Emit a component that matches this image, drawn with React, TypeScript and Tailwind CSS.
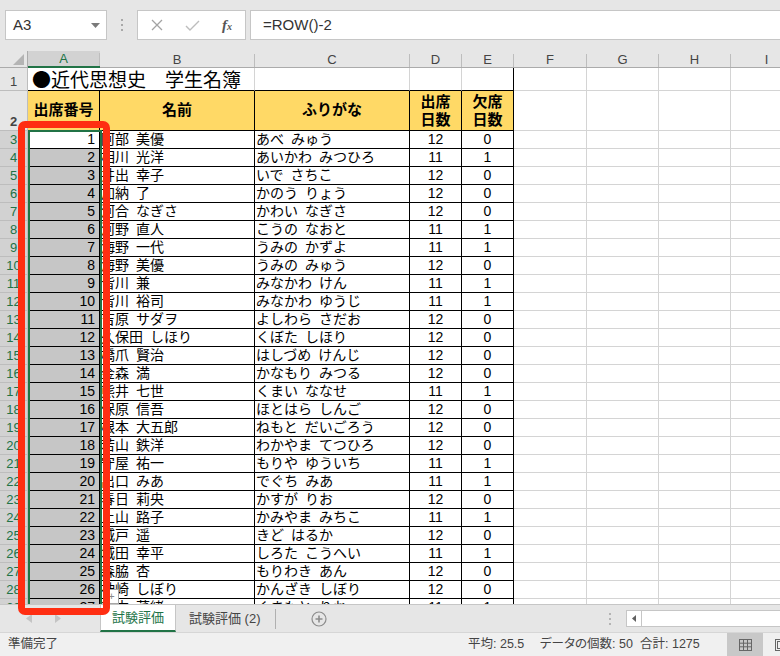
import React from "react";

// 出欠データ (A3:E29 が見えている範囲)
const students: [string, string, number, number][] = [
  ["阿部 美優", "あべ みゅう", 12, 0],
  ["相川 光洋", "あいかわ みつひろ", 11, 1],
  ["井出 幸子", "いで さちこ", 12, 0],
  ["加納 了", "かのう りょう", 12, 0],
  ["河合 なぎさ", "かわい なぎさ", 12, 0],
  ["河野 直人", "こうの なおと", 11, 1],
  ["海野 一代", "うみの かずよ", 11, 1],
  ["海野 美優", "うみの みゅう", 12, 0],
  ["皆川 兼", "みなかわ けん", 11, 1],
  ["皆川 裕司", "みなかわ ゆうじ", 11, 1],
  ["吉原 サダヲ", "よしわら さだお", 12, 0],
  ["久保田 しほり", "くぼた しほり", 12, 0],
  ["橋爪 賢治", "はしづめ けんじ", 12, 0],
  ["金森 満", "かなもり みつる", 12, 0],
  ["熊井 七世", "くまい ななせ", 11, 1],
  ["保原 信吾", "ほとはら しんご", 12, 0],
  ["根本 大五郎", "ねもと だいごろう", 12, 0],
  ["若山 鉄洋", "わかやま てつひろ", 12, 0],
  ["守屋 祐一", "もりや ゆういち", 11, 1],
  ["出口 みあ", "でぐち みあ", 11, 1],
  ["春日 莉央", "かすが りお", 12, 0],
  ["上山 路子", "かみやま みちこ", 11, 1],
  ["城戸 遥", "きど はるか", 12, 0],
  ["城田 幸平", "しろた こうへい", 11, 1],
  ["森脇 杏", "もりわき あん", 12, 0],
  ["神崎 しぼり", "かんざき しぼり", 12, 0],
  ["熊本 菜緒", "くまもと りお", 11, 1],
];

const sp = (s: string) => s.replace(" ", "\u2002");

const RowHead = ({ n, sel }: { n: number; sel?: boolean }) => (
  <div
    className={`w-[28px] shrink-0 flex items-end justify-center border-r border-b border-[#bdbdbd] text-[13px] leading-[16px] ${
      sel ? "bg-[#d2d2d2] text-[#217346]" : "bg-[#e6e6e6] text-[#444]"
    }`}
  >
    {n}
  </div>
);

const ColHead = ({ label, w, sel }: { label: string; w: string; sel?: boolean }) => (
  <div
    className={`${w} shrink-0 flex items-end text-[13px] leading-[15px] ${
      sel ? "bg-[#d2d2d2] text-[#217346] border-b-2 border-[#217346]" : "text-[#444] border-b border-[#ababab]"
    }`}
  >
    <span className="flex-1 text-center">{label}</span>
    <span className="w-px h-[13px] bg-[#bdbdbd] self-end" />
  </div>
);

// 右側の空セル (F〜J)
const EmptyCells = () => (
  <>
    <div className="w-[73px] shrink-0 border-r border-b border-[#d4d4d4]" />
    <div className="w-[72px] shrink-0 border-r border-b border-[#d4d4d4]" />
    <div className="w-[72px] shrink-0 border-r border-b border-[#d4d4d4]" />
    <div className="w-[72px] shrink-0 border-r border-b border-[#d4d4d4]" />
    <div className="w-[72px] shrink-0 border-r border-b border-[#d4d4d4]" />
  </>
);

export default function App() {
  return (
    <div className="relative w-[780px] h-[656px] overflow-hidden flex flex-col bg-white font-['Liberation_Sans','Noto_Sans_CJK_JP',sans-serif]">
      {/* 数式バー */}
      <div className="h-[51px] shrink-0 bg-[#e6e6e6] flex items-start pt-[10px] pl-[5px]">
        <div className="w-[102px] h-[30px] shrink-0 bg-white border border-[#c6c6c6] flex items-center pl-[7px] pr-[6px]">
          <span className="flex-1 text-[15px] text-[#333]">A3</span>
          <svg width="9" height="5">
            <polygon points="0,0 9,0 4.5,5" fill="#7a7a7a" />
          </svg>
        </div>
        <div className="w-[30px] h-[30px] shrink-0 flex flex-col items-center justify-center gap-[3px]">
          <span className="w-[2px] h-[2px] bg-[#a8a8a8]" />
          <span className="w-[2px] h-[2px] bg-[#a8a8a8]" />
          <span className="w-[2px] h-[2px] bg-[#a8a8a8]" />
        </div>
        <div className="w-[109px] h-[30px] shrink-0 bg-white border border-[#c6c6c6] flex items-center">
          <div className="w-[37px] flex justify-center">
            <svg width="12" height="12">
              <path d="M1 1L11 11M11 1L1 11" stroke="#a3a3a3" strokeWidth="1.3" />
            </svg>
          </div>
          <div className="w-[34px] flex justify-center">
            <svg width="15" height="11">
              <path d="M1 6L5 10L14 1" stroke="#bdbdbd" strokeWidth="1.4" fill="none" />
            </svg>
          </div>
          <div className="w-[36px] flex justify-center">
            <span className="italic font-bold font-['Liberation_Serif',serif] text-[15px] text-[#555] leading-none">
              f<span className="text-[10px]">x</span>
            </span>
          </div>
        </div>
        <div className="w-[4px] shrink-0" />
        <div className="w-[540px] h-[30px] shrink-0 bg-white border border-[#c6c6c6] flex items-center pl-[12px] text-[15px] text-[#333]">
          =ROW()-2
        </div>
      </div>

      {/* シート */}
      <div className="relative h-[553px] shrink-0 overflow-hidden text-[14px] text-black">
        {/* 列見出し */}
        <div className="flex h-[17px] bg-[#e6e6e6]">
          <div className="w-[28px] shrink-0 relative border-r border-b border-[#ababab]">
            <svg width="11" height="11" className="absolute right-[3px] bottom-[2px]">
              <polygon points="11,0 11,11 0,11" fill="#b4b4b4" />
            </svg>
          </div>
          <ColHead label="A" w="w-[72px]" sel />
          <ColHead label="B" w="w-[155px]" />
          <ColHead label="C" w="w-[155px]" />
          <ColHead label="D" w="w-[52px]" />
          <ColHead label="E" w="w-[52px]" />
          <ColHead label="F" w="w-[73px]" />
          <ColHead label="G" w="w-[72px]" />
          <ColHead label="H" w="w-[72px]" />
          <ColHead label="I" w="w-[72px]" />
          <ColHead label="J" w="w-[72px]" />
        </div>

        {/* 1行目: タイトル */}
        <div className="flex h-[23px]">
          <RowHead n={1} />
          <div className="w-[72px] shrink-0 border-b border-black whitespace-nowrap pl-[4px] text-[19px] leading-[22px] font-['Noto_Sans_CJK_JP',sans-serif]">
            ●近代思想史　学生名簿
          </div>
          <div className="w-[155px] shrink-0 border-r border-b border-r-[#d4d4d4] border-b-black" />
          <div className="w-[155px] shrink-0 border-r border-b border-r-[#d4d4d4] border-b-black" />
          <div className="w-[52px] shrink-0 border-r border-b border-r-[#d4d4d4] border-b-black" />
          <div className="w-[52px] shrink-0 border-r border-b border-black" />
          <EmptyCells />
        </div>

        {/* 2行目: 見出し */}
        <div className="flex h-[40px] font-bold text-[15px]">
          <RowHead n={2} />
          <div className="w-[72px] shrink-0 border-r border-b border-black bg-[#ffd966] flex items-center justify-center">
            出席番号
          </div>
          <div className="w-[155px] shrink-0 border-r border-b border-black bg-[#ffd966] flex items-center justify-center">
            名前
          </div>
          <div className="w-[155px] shrink-0 border-r border-b border-black bg-[#ffd966] flex items-center justify-center">
            ふりがな
          </div>
          <div className="w-[52px] shrink-0 border-r border-b border-black bg-[#ffd966] flex items-center justify-center text-center leading-[18px]">
            出席
            <br />
            日数
          </div>
          <div className="w-[52px] shrink-0 border-r border-b border-black bg-[#ffd966] flex items-center justify-center text-center leading-[18px]">
            欠席
            <br />
            日数
          </div>
          <EmptyCells />
        </div>

        {/* データ行 */}
        {students.map((s, i) => {
          const no = i + 1;
          return (
            <div key={no} className="flex h-[18px] leading-[17px]">
              <RowHead n={no + 2} sel />
              <div
                className={`w-[72px] shrink-0 border-r border-b border-black text-right pr-[4px] ${
                  no === 1 ? "bg-white" : "bg-[#c6c6c6]"
                }`}
              >
                {no}
              </div>
              <div className="w-[155px] shrink-0 border-r border-b border-black pl-[1px] whitespace-nowrap overflow-hidden">
                {sp(s[0])}
              </div>
              <div className="w-[155px] shrink-0 border-r border-b border-black pl-[1px] whitespace-nowrap overflow-hidden">
                {sp(s[1])}
              </div>
              <div className="w-[52px] shrink-0 border-r border-b border-black text-center">{s[2]}</div>
              <div className="w-[52px] shrink-0 border-r border-b border-black text-center">{s[3]}</div>
              <EmptyCells />
            </div>
          );
        })}

        {/* 選択範囲 A3:A52 */}
        <div className="absolute left-[28px] top-[79px] w-[74px] h-[600px] border-2 border-[#217346] pointer-events-none" />

        {/* クイック分析 */}
        <div className="absolute left-[104px] top-[538px] w-[15px] h-[15px] bg-white border border-[#a6a6a6] flex items-center justify-center text-[11px] leading-none text-[#888]">
          +
        </div>
      </div>

      {/* シート見出し */}
      <div className="h-[28px] shrink-0 bg-[#e6e6e6] border-t border-[#c6c6c6] flex items-stretch text-[13px]">
        <div className="w-[100px] shrink-0 flex items-center">
          <svg width="6" height="9" className="ml-[26px]">
            <polygon points="6,0 6,9 0,4.5" fill="#c4c4c4" />
          </svg>
          <svg width="6" height="9" className="ml-[23px]">
            <polygon points="0,0 0,9 6,4.5" fill="#c4c4c4" />
          </svg>
        </div>
        <div className="w-[76px] shrink-0 bg-white border-l border-r border-[#c6c6c6] border-b-2 border-b-[#217346] flex items-center justify-center text-[#217346]">
          試験評価
        </div>
        <div className="w-[99px] shrink-0 flex items-center pl-[13px] text-[#444]">試験評価 (2)</div>
        <div className="w-px h-[20px] self-center bg-[#b0b0b0] shrink-0" />
        <div className="ml-[35px] shrink-0 flex items-center">
          <svg width="16" height="16">
            <circle cx="8" cy="8" r="7" fill="none" stroke="#8c8c8c" strokeWidth="1.2" />
            <path d="M8 4.5V11.5M4.5 8H11.5" stroke="#8c8c8c" strokeWidth="1.6" />
          </svg>
        </div>
        <div className="ml-[280px] w-[6px] shrink-0 flex flex-col items-center justify-center gap-[3px]">
          <span className="w-[2px] h-[2px] bg-[#b4b4b4]" />
          <span className="w-[2px] h-[2px] bg-[#b4b4b4]" />
          <span className="w-[2px] h-[2px] bg-[#b4b4b4]" />
        </div>
        <div className="ml-[13px] w-[170px] h-[17px] self-center shrink-0 bg-white border border-[#c6c6c6] flex">
          <div className="w-[15px] border-r border-[#c6c6c6] flex items-center justify-center">
            <svg width="4" height="7">
              <polygon points="4,0 4,7 0,3.5" fill="#606060" />
            </svg>
          </div>
        </div>
      </div>

      {/* ステータスバー */}
      <div className="h-[24px] shrink-0 bg-[#f0f0f0] border-t border-[#d6d6d6] flex items-stretch text-[12.5px] text-[#444] [font-feature-settings:'palt']">
        <div className="flex items-center pl-[8px]">準備完了</div>
        <div className="flex-1" />
        <div className="w-[72px] shrink-0 flex items-center">平均: 25.5</div>
        <div className="w-[100px] shrink-0 flex items-center">データの個数: 50</div>
        <div className="w-[87px] shrink-0 flex items-center">合計: 1275</div>
        <div className="w-[36px] shrink-0 bg-[#c8c8c8] flex items-center justify-center">
          <svg width="13" height="12">
            <rect x="0.5" y="0.5" width="12" height="11" fill="none" stroke="#666" />
            <path d="M4.5 0.5V11.5M8.5 0.5V11.5M0.5 4.2H12.5M0.5 7.8H12.5" stroke="#666" />
          </svg>
        </div>
        <div className="w-[17px] shrink-0 flex items-center pl-[12px] overflow-hidden">
          <svg width="12" height="12" className="shrink-0">
            <rect x="0.5" y="0.5" width="11" height="11" fill="none" stroke="#666" />
            <rect x="2.5" y="2.5" width="7" height="7" fill="none" stroke="#666" />
          </svg>
        </div>
      </div>

      {/* 注釈の赤枠 */}
      <div className="absolute left-[18px] top-[121px] w-[92px] h-[494px] border-[7px] border-[#ff2e12] rounded-[7px] pointer-events-none" />
    </div>
  );
}
